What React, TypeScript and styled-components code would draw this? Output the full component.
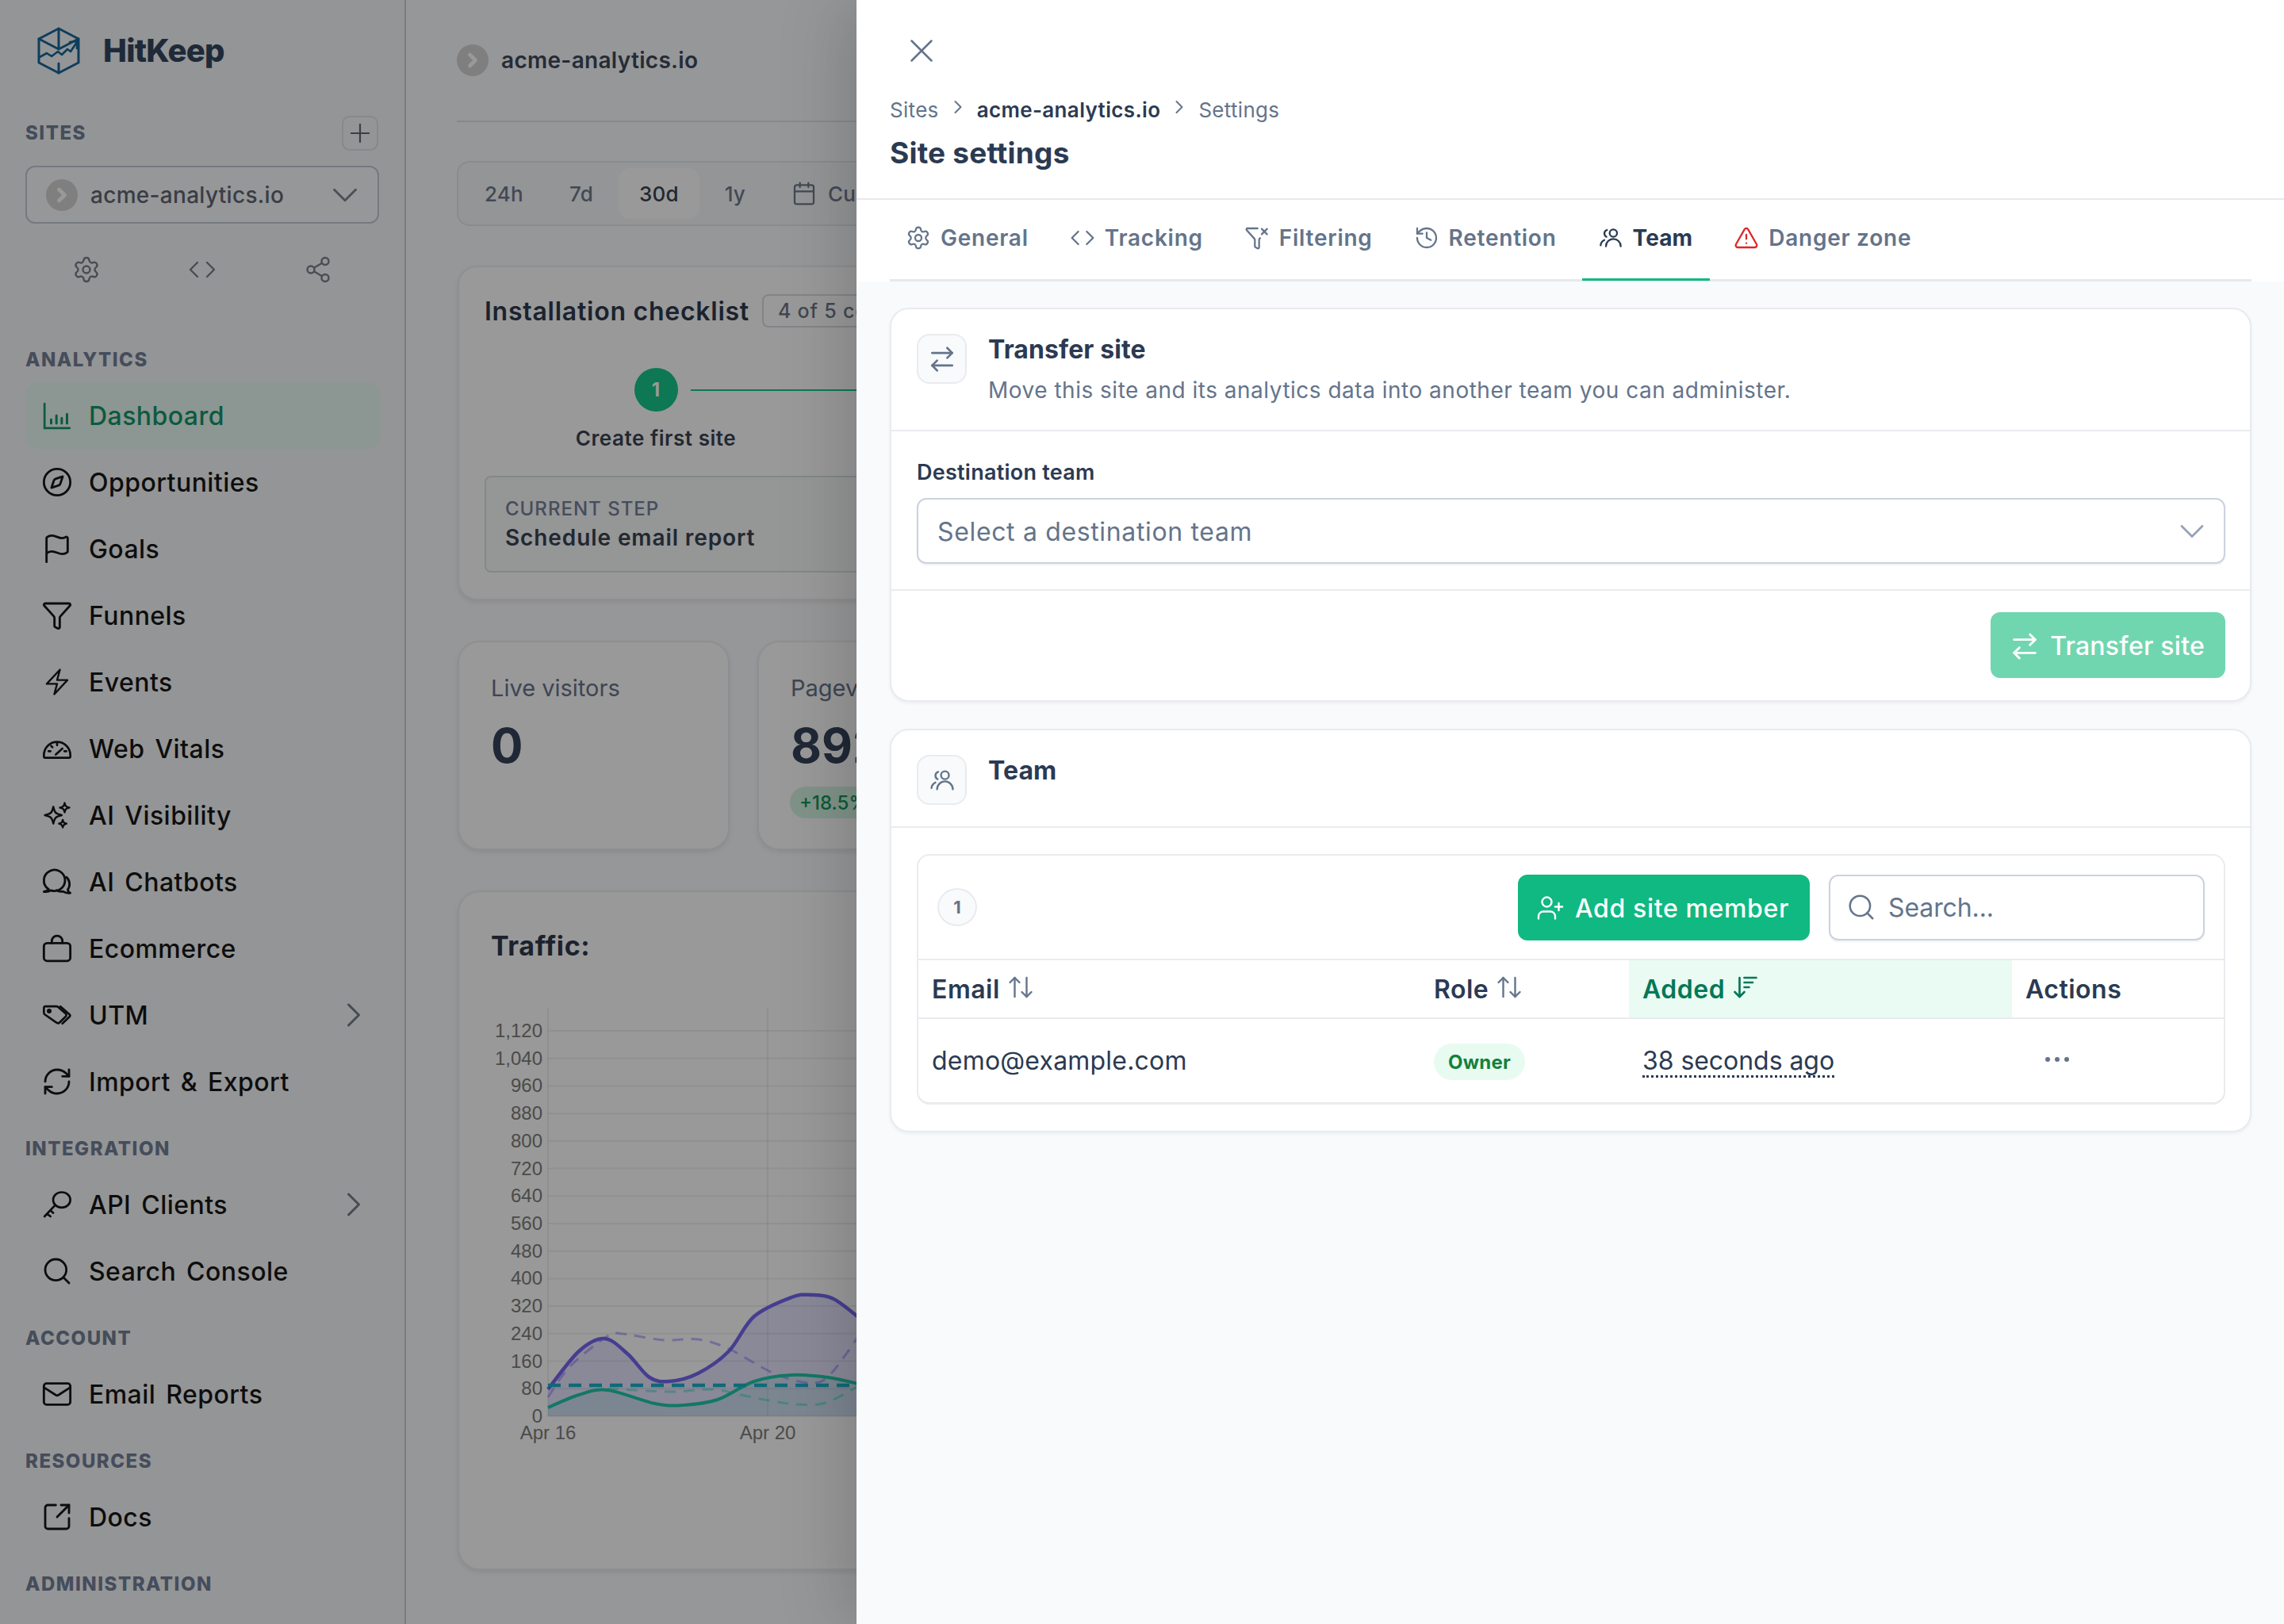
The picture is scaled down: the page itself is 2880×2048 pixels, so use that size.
import React from "react";
import styled, { createGlobalStyle } from "styled-components";
import {
  ArrowDownWideNarrow, ArrowRightLeft, ArrowUpDown, Calendar, ChevronDown, ChevronRight, Code, Compass, Flag, Funnel, FunnelX,
  History, Mail, Plus, RefreshCw, Search, Settings, Share2, SquareArrowOutUpRight, TriangleAlert, UserPlus, X,
} from "lucide-react";
import { HiOutlineBolt, HiOutlineSparkles } from "react-icons/hi2";

const Global = createGlobalStyle`
  html, body { margin: 0; padding: 0; background: #fff; }
  * { box-sizing: border-box; }
  body { font-family: Inter, "Liberation Sans", sans-serif; }
`;

const Shell = styled.div`
  position: relative; display: flex; width: 2880px; height: 2048px; overflow: hidden; background: #fbfcfe;
`;

/* ---------- sidebar ---------- */
const Sidebar = styled.aside`
  flex: 0 0 512px; height: 100%; background: #f7f9fb; border-right: 2px solid #ccd0d6; display: flex; flex-direction: column;
`;
const Brand = styled.div`
  display: flex; align-items: center; gap: 28px; padding: 34px 0 0 46px;
`;
const BrandName = styled.span`
  font-size: 40px; font-weight: 800; line-height: 60px; color: #34465f; letter-spacing: -0.8px;
`;
const SitesHead = styled.div`
  display: flex; align-items: center; justify-content: space-between; margin: 52px 33px 0 32px;
`;
const Label = styled.div`
  font-size: 24px; font-weight: 800; line-height: 40px; color: #74809a; letter-spacing: 1.5px; text-transform: uppercase;
`;
const AddSite = styled.span`
  display: flex; align-items: center; justify-content: center; width: 46px; height: 44px; border-radius: 10px;
  border: 2px solid #dfe4ea; color: #636a76;
`;
const SiteSelect = styled.div`
  display: flex; align-items: center; height: 73px; margin: 19px 32px 0 32px; padding: 0 14px 0 24px; border-radius: 12px;
  border: 2px solid #c3cad6; color: #5f6674; background: #fbfcfe;
`;
const SelectMark = styled.span`
  display: flex; color: #7e8694;
`;
const Avatar = styled.span`
  display: flex; align-items: center; justify-content: center; width: 40px; height: 40px; border-radius: 50%; background: #d4d4d4; color: #fff; flex: none;
`;
const SiteName = styled.span`
  font-size: 28px; font-weight: 500; margin-left: 16px; flex: 1; letter-spacing: 0.3px;
`;
const SiteTools = styled.div`
  display: grid; grid-template-columns: repeat(3, 1fr); margin: 26px 36px 0; height: 64px; color: #78808c;
  & > span { display: flex; align-items: center; justify-content: center; }
`;
const Section = styled.section<{ $top: number }>`
  margin-top: ${(p) => p.$top}px;
`;
const SectionLabel = styled(Label)`
  padding-left: 32px; margin-bottom: 8px;
`;
const NavRow = styled.div<{ $active?: boolean }>`
  display: flex; align-items: center; gap: 20px; height: 84px; margin: 0 30px 0 32px; padding: 0 8px 0 20px; border-radius: 16px;
  color: ${(p) => (p.$active ? "#139669" : "#161616")};
  background: ${(p) => (p.$active ? "#eafbf3" : "transparent")};
`;
const NavIcon = styled.span`
  display: flex; align-items: center; justify-content: center; width: 40px; height: 40px; flex: none;
`;
const NavText = styled.span`
  flex: 1; font-size: 32px; font-weight: 500; letter-spacing: 0.45px; word-spacing: 4px;
`;
const NavChevron = styled.span`
  display: flex; color: #767f8e;
`;

/* ---------- main content behind the drawer ---------- */
const Main = styled.main`
  flex: 1; min-width: 0; padding: 0 32px 0 64px;
`;
const TopBar = styled.div`
  display: flex; align-items: center; gap: 16px; height: 154px; border-bottom: 2px solid #e2e5e9;
`;
const TopSite = styled.span`
  font-size: 28px; font-weight: 600; color: #3f4a5c; letter-spacing: 0.3px;
`;
const RangeBar = styled.div`
  display: flex; align-items: center; gap: 6px; height: 82px; margin-top: 49px; padding: 0 7px; border-radius: 16px;
  border: 2px solid #e5e8ec; background: #f7f8fa;
`;
const RangeItem = styled.span<{ $active?: boolean }>`
  display: flex; align-items: center; gap: 14px; height: 64px; padding: 0 26px; border-radius: 14px; font-size: 26px; font-weight: 500; letter-spacing: 0.2px;
  color: ${(p) => (p.$active ? "#3a4353" : "#6f7b8e")};
  background: ${(p) => (p.$active ? "#fff" : "transparent")};
`;
const Card = styled.div`
  margin-left: 1px; background: #fff; border: 2px solid #eceef1; border-radius: 24px; box-shadow: 0 3px 6px rgba(0, 0, 0, 0.08);
`;
const Checklist = styled(Card)`
  margin-top: 50px; height: 422px; padding: 34px 32px;
`;
const CheckHead = styled.div`
  display: flex; align-items: center; gap: 16px; height: 42px;
`;
const CheckTitle = styled.span`
  font-size: 32px; font-weight: 600; color: #2f3a4d; letter-spacing: 0.75px; white-space: nowrap;
`;
const CheckBadge = styled.span`
  display: flex; align-items: center; height: 42px; padding: 0 18px; border: 2px solid #d9dde3; border-radius: 8px; color: #6e7788;
  font-size: 25px; font-weight: 500; letter-spacing: 0.8px; white-space: nowrap;
`;
const Steps = styled.div`
  display: flex; margin-top: 51px;
`;
const Step = styled.div`
  position: relative; flex: 0 0 432px; display: flex; flex-direction: column; align-items: center;
`;
const StepDot = styled.span`
  display: flex; align-items: center; justify-content: center; width: 55px; height: 55px; border-radius: 50%; background: #16c98a;
  color: #fff; font-size: 24px; font-weight: 700;
`;
const StepLine = styled.span`
  position: absolute; left: 260px; top: 27px; width: 400px; height: 2px; background: #16c98a;
`;
const StepName = styled.span`
  margin-top: 16px; font-size: 26px; line-height: 36px; font-weight: 600; color: #3a4353; letter-spacing: 0.55px;
`;
const CurrentStep = styled.div`
  margin-top: 29px; height: 122px; padding: 22px 24px; border: 2px solid #dde1e6; border-radius: 8px; background: #f9fafb;
`;
const CurrentLabel = styled.div`
  font-size: 24px; line-height: 36px; font-weight: 500; color: #74809a; letter-spacing: 1px; text-transform: uppercase;
`;
const CurrentName = styled.div`
  font-size: 28px; line-height: 37px; font-weight: 600; color: #3a4353; letter-spacing: 0.9px;
`;
const Stats = styled.div`
  display: grid; grid-template-columns: 344px 344px 344px; gap: 34px; margin-top: 51px;
`;
const Stat = styled(Card)`
  height: 264px; padding: 38px 40px; border-radius: 28px;
`;
const StatLabel = styled.div`
  font-size: 29px; line-height: 40px; color: #68748a;
`;
const StatValue = styled.div`
  margin-top: 16px; font-size: 60px; line-height: 72px; font-weight: 700; color: #36435a;
`;
const Trend = styled.span`
  display: inline-flex; align-items: center; height: 40px; margin-top: 16px; margin-left: -1px; padding: 0 12px; border-radius: 20px; background: #d5f5e5;
  color: #11985f; font-size: 24px; font-weight: 500;
`;
const Traffic = styled(Card)`
  margin-top: 51px; height: 857px; padding: 46px 40px; border-radius: 28px;
`;
const TrafficTitle = styled.div`
  font-size: 34px; line-height: 44px; font-weight: 700; color: #2f3a4d; letter-spacing: 0.6px;
`;
const ChartSvg = styled.svg`
  display: block; margin: 25px 0 0 -40px; overflow: visible;
  font-family: "Liberation Sans", Arial, sans-serif;
`;

/* ---------- overlay + drawer ---------- */
const Scrim = styled.div`
  position: absolute; inset: 0; background: rgba(0, 0, 0, 0.4);
`;
const Drawer = styled.div`
  position: absolute; top: 0; right: 0; bottom: 0; width: 1800px; background: #f9fafc; box-shadow: 0 0 90px rgba(0, 0, 0, 0.22);
  display: flex; flex-direction: column;
`;
const DrawerHead = styled.header`
  height: 252px; padding: 32px 42px 0; background: #fff; border-bottom: 2px solid #e6e8ec;
`;
const CloseButton = styled.span`
  display: flex; align-items: center; justify-content: center; width: 64px; height: 64px; margin-left: 8px; color: #64748b;
`;
const Crumbs = styled.nav`
  display: flex; align-items: center; height: 40px; margin-top: 22px; gap: 10px; font-size: 26px; color: #64748b; letter-spacing: 0.3px;
`;
const CrumbStrong = styled.span`
  font-weight: 600; color: #2b3a52; letter-spacing: 0.35px;
`;
const CrumbSep = styled.span`
  display: flex; margin-top: -6px; color: #64748b;
`;
const DrawerTitle = styled.h1`
  margin: 11px 0 0; font-size: 37px; line-height: 48px; font-weight: 700; color: #2b3a52; letter-spacing: 0.2px;
`;
const TabsRow = styled.div`
  display: flex; background: #fff;
`;
const Tabs = styled.div`
  display: flex; flex: 1; gap: 10px; height: 103px; margin: 0 41px 0 42px; border-bottom: 3px solid #e6e8ec;
`;
const Tab = styled.div<{ $active?: boolean }>`
  display: flex; align-items: center; gap: 12px; height: 102px; padding: 0 22px 4px 20px; font-size: 28px; margin-bottom: -2px;
  font-weight: ${(p) => (p.$active ? 700 : 600)};
  letter-spacing: ${(p) => (p.$active ? 0.1 : 0.75)}px;
  color: ${(p) => (p.$active ? "#2b3a52" : "#64748b")};
  border-bottom: 3px solid ${(p) => (p.$active ? "#10b981" : "transparent")};
`;
const Body = styled.div`
  padding: 33px 41px 0 42px; display: flex; flex-direction: column; gap: 34px;
`;
const Panel = styled.section`
  background: #fff; border: 2px solid #e9ebef; border-radius: 24px; box-shadow: 0 2px 4px rgba(15, 23, 42, 0.05);
`;
const PanelHead = styled.div<{ $pad: number }>`
  display: flex; gap: 27px; padding: 31px 31px ${(p) => p.$pad}px 32px; border-bottom: 2px solid #e9ebef;
`;
const IconTile = styled.span`
  display: flex; align-items: center; justify-content: center; width: 63px; height: 63px; flex: none; border-radius: 16px;
  background: #f8fafc; border: 2px solid #e9ebef; color: #64748b;
`;
const PanelTitle = styled.div`
  font-size: 32px; line-height: 40px; font-weight: 700; color: #2b3a52; letter-spacing: 0.1px;
`;
const PanelDesc = styled.div`
  margin-top: 11px; font-size: 28px; line-height: 40px; color: #64748b; letter-spacing: 0.5px;
`;
const FormBlock = styled.div`
  padding: 34px 31px 32px 32px; border-bottom: 2px solid #e9ebef;
`;
const FieldLabel = styled.div`
  font-size: 27px; line-height: 36px; font-weight: 600; color: #2b3a52; letter-spacing: 0.25px;
`;
const Select = styled.div`
  display: flex; align-items: center; justify-content: space-between; height: 83px; margin-top: 14px; padding: 1px 14px 0 24px;
  border: 2px solid #cbd2de; border-radius: 12px; box-shadow: 0 2px 2px rgba(15, 23, 42, 0.05);
  font-size: 32px; color: #64748b; letter-spacing: 0.65px;
`;
const SelectChevron = styled.span`
  display: flex; color: #94a3b8;
`;
const PanelFoot = styled.div`
  display: flex; justify-content: flex-end; padding: 27px 31px 28px;
`;
const PrimaryButton = styled.span<{ $muted?: boolean }>`
  display: inline-flex; align-items: center; gap: ${(p) => (p.$muted ? 12 : 13)}px; height: 83px; padding: 2px 26px 0 ${(p) => (p.$muted ? 23 : 23)}px; border-radius: 12px; font-size: 32px; font-weight: 500; color: #fff; white-space: nowrap;
  letter-spacing: ${(p) => (p.$muted ? 0.25 : 0.65)}px;
  background: ${(p) => (p.$muted ? "#70d6b0" : "#10b981")};
`;
const PanelContent = styled.div`
  padding: 33px 31px 33px 32px;
`;
const TableBox = styled.div`
  border: 2px solid #e9ebef; border-bottom-width: 3px; border-radius: 16px;
`;
const Toolbar = styled.div`
  display: flex; align-items: center; gap: 24px; height: 132px; padding: 0 24px; border-bottom: 2px solid #e9ebef;
`;
const Count = styled.span`
  display: flex; align-items: center; justify-content: center; width: 50px; height: 48px; margin-right: auto; border-radius: 50%;
  background: #f8fafc; border: 2px solid #e9ebef; color: #64748b; font-size: 22px; font-weight: 700;
`;
const SearchBox = styled.div`
  display: flex; align-items: center; gap: 15px; width: 474px; height: 83px; padding: 0 20px; border: 2px solid #cbd2de; border-radius: 12px;
  box-shadow: 0 2px 2px rgba(15, 23, 42, 0.05); font-size: 32px; color: #64748b; letter-spacing: -0.1px;
`;
const Grid = styled.div`
  display: grid; grid-template-columns: 633px 263px 483px 1fr; align-items: stretch;
`;
const HeadRow = styled(Grid)`
  height: 74px; border-bottom: 2px solid #e9ebef;
`;
const HeadCell = styled.div<{ $sorted?: boolean }>`
  display: flex; align-items: center; gap: 8px; padding-left: 17px; font-size: 32px; font-weight: 600; letter-spacing: 0.5px;
  color: ${(p) => (p.$sorted ? "#047857" : "#2b3a52")};
  background: ${(p) => (p.$sorted ? "#e9fbf3" : "transparent")};
`;
const SortIcon = styled.span<{ $sorted?: boolean }>`
  display: flex; margin-top: -4px; color: ${(p) => (p.$sorted ? "#047857" : "#64748b")};
`;
const BodyRow = styled(Grid)`
  height: 105px;
`;
const Cell = styled.div`
  display: flex; align-items: center; padding-left: 17px; font-size: 32px; color: #2b3a52; letter-spacing: 0.2px;
`;
const OwnerPill = styled.span`
  display: inline-flex; align-items: center; height: 46px; margin-top: 3px; padding: 0 18px; border-radius: 23px; background: #e8fbf0; color: #15803d;
  font-size: 24px; font-weight: 700;
`;
const TimeAgo = styled.span`
  margin-top: 3px; border-bottom: 3px dotted #2b3a52; line-height: 36px; letter-spacing: -0.05px;
`;
const Dots = styled.svg`
  display: block; margin: -4px 0 0 24px; color: #64748b;
`;

/* ---------- drawings ---------- */
const Logo = () => (
  <svg width="56" height="60" viewBox="0 0 56 60" fill="none" stroke="#196799" strokeWidth="3" strokeLinejoin="round" strokeLinecap="round">
    <path d="M28 2 53 15v30L28 58 3 45V15z" />
    <path d="M3 15l25 13 25-13M28 2v26M28 46v12" />
    <path d="M4 38l9-5 6 4 8-6 5 4 7-7 4 3 8-12" strokeWidth="2.6" />
    <path d="M42 19l9-1 0 9" strokeWidth="2.6" />
  </svg>
);
const ChartIcon = () => (
  <svg width="40" height="40" viewBox="0 0 24 24" fill="none" stroke="currentColor" strokeWidth="1.6" strokeLinecap="round">
    <path d="M2.500 3v18.500h19" />
    <path d="M7.500 15v3M11.500 12v6M15.500 14v4M19.500 11v7" strokeWidth="1.8" />
  </svg>
);
const GaugeIcon = () => (
  <svg width="40" height="40" viewBox="0 0 24 24" fill="none" stroke="currentColor" strokeWidth="1.6" strokeLinecap="round" strokeLinejoin="round">
    <path d="M2 17a10 10 0 0 1 20 0v1a1 1 0 0 1-1 1H3a1 1 0 0 1-1-1z" />
    <path d="M11 16.500l5-4.500M12 7.500v2M5.500 14h1.500M17.500 14H19M7.500 10l1 1" />
  </svg>
);
const ChatsIcon = () => (
  <svg width="40" height="40" viewBox="0 0 24 24" fill="none" stroke="currentColor" strokeWidth="1.7" strokeLinecap="round" strokeLinejoin="round">
    <path d="M2 19.500c2-.4 3-1 3.600-1.800A8 8 0 1 1 18 11a8 8 0 0 1-10.600 7.500 8 8 0 0 1-5.400 1z" />
    <path d="M19 8.500a7 7 0 0 1 1 9.500c.3 1 1 2 2 2.500-2 .2-4-.2-5.500-1.200a7 7 0 0 1-5-.8" />
  </svg>
);
const BagIcon = () => (
  <svg width="40" height="40" viewBox="0 0 24 24" fill="none" stroke="currentColor" strokeWidth="1.7" strokeLinecap="round" strokeLinejoin="round">
    <rect x="2" y="8" width="20" height="13.500" rx="2.500" />
    <path d="M8 8V6.500a4 4 0 0 1 8 0V8" />
  </svg>
);
const TagsIcon = () => (
  <svg width="40" height="40" viewBox="0 0 24 24" fill="none" stroke="currentColor" strokeWidth="1.6" strokeLinecap="round" strokeLinejoin="round">
    <path d="M2 6.500a1 1 0 0 1 1-1h8.500a2 2 0 0 1 1.300.5L18.500 11a1.500 1.500 0 0 1 0 2.200L14 17.500a2 2 0 0 1-2.700.1L2.800 11.700A2 2 0 0 1 2 10z" />
    <path d="M14.500 5.500l7 6.200a1 1 0 0 1 0 1.500l-5.500 5.300" />
    <circle cx="6" cy="9" r="1" />
  </svg>
);
const KeyIcon = () => (
  <svg width="40" height="40" viewBox="0 0 24 24" fill="none" stroke="currentColor" strokeWidth="1.6" strokeLinecap="round" strokeLinejoin="round">
    <ellipse cx="15.500" cy="8.500" rx="6.500" ry="5.800" />
    <path d="M10.500 12.500 2.500 21M4.500 19l2.500 2M7 16.500l2 1.800" />
  </svg>
);
const TeamIcon = ({ size = 34 }: { size?: number }) => (
  <svg width={size} height={size} viewBox="0 0 24 24" fill="none" stroke="currentColor" strokeWidth="1.7" strokeLinecap="round" strokeLinejoin="round">
    <circle cx="14.500" cy="7.500" r="3.500" />
    <path d="M7.500 20a7 7 0 0 1 14 0M8.500 4.500a3.500 3.500 0 0 0-.5 6.500M2.500 19a6 6 0 0 1 3.500-5" />
  </svg>
);
const SiteChevron = () => <ChevronRight size={28} strokeWidth={4} />;

/* ---------- chart ---------- */
type Pt = [number, number];
const smooth = (pts: Pt[]) => {
  let d = `M${pts[0][0]} ${pts[0][1]}`;
  for (let i = 0; i < pts.length - 1; i++) {
    const p0 = pts[i - 1] || pts[i];
    const p1 = pts[i];
    const p2 = pts[i + 1];
    const p3 = pts[i + 2] || p2;
    const c1x = p1[0] + (p2[0] - p0[0]) / 6;
    const c1y = p1[1] + (p2[1] - p0[1]) / 6;
    const c2x = p2[0] - (p3[0] - p1[0]) / 6;
    const c2y = p2[1] - (p3[1] - p1[1]) / 6;
    d += ` C${c1x} ${c1y} ${c2x} ${c2y} ${p2[0]} ${p2[1]}`;
  }
  return d;
};
const purple: Pt[] = [[690, 1752], [729, 1704], [761, 1688], [790, 1707], [818, 1737], [843, 1742], [879, 1732], [918, 1704], [950, 1660], [997, 1636], [1022, 1633], [1050, 1638], [1085, 1664]];
const purpleDash: Pt[] = [[690, 1762], [718, 1723], [765, 1685], [783, 1682], [836, 1690], [879, 1689], [918, 1701], [975, 1732], [1022, 1744], [1047, 1732], [1085, 1680]];
const green: Pt[] = [[690, 1775], [729, 1759], [765, 1753], [825, 1770], [861, 1772], [904, 1765], [950, 1742], [997, 1734], [1043, 1737], [1085, 1746]];
const greenDash: Pt[] = [[765, 1751], [843, 1755], [897, 1752], [933, 1759], [968, 1766], [1004, 1771], [1040, 1769], [1085, 1746]];
const yLabels = ["1,120", "1,040", "960", "880", "800", "720", "640", "560", "480", "400", "320", "240", "160", "80", "0"];
const area = (pts: Pt[]) => `${smooth(pts)} L1085 1786 L690 1786 Z`;

const Chart = () => (
  <ChartSvg width="520" height="600" viewBox="578 1240 520 600">
    {yLabels.map((l, i) => {
      const y = 1300 + i * 34.71;
      return (
        <g key={l}>
          <line x1="690" x2="1090" y1={y} y2={y} stroke="#000" strokeOpacity="0.06" strokeWidth="2" />
          <text x="683" y={y + 8} textAnchor="end" fontSize="24" fill="#7d7d7d">{l}</text>
        </g>
      );
    })}
    <line x1="690" x2="690" y1="1271" y2="1786" stroke="#000" strokeOpacity="0.06" strokeWidth="2" />
    <line x1="967" x2="967" y1="1271" y2="1786" stroke="#000" strokeOpacity="0.06" strokeWidth="2" />
    <text x="690" y="1815" textAnchor="middle" fontSize="24" fill="#7d7d7d">Apr 16</text>
    <text x="967" y="1815" textAnchor="middle" fontSize="24" fill="#7d7d7d">Apr 20</text>
    <path d={area(purple)} fill="#6a55f5" fillOpacity="0.16" />
    <path d={area(green)} fill="#21c9a7" fillOpacity="0.12" />
    <path d={smooth(purpleDash)} fill="none" stroke="#7d67ff" strokeOpacity="0.45" strokeWidth="3" strokeDasharray="14 10" />
    <path d={smooth(greenDash)} fill="none" stroke="#21d9b7" strokeOpacity="0.45" strokeWidth="3" strokeDasharray="14 10" />
    <path d={smooth(purple)} fill="none" stroke="#7468f0" strokeWidth="4.500" />
    <path d={smooth(green)} fill="none" stroke="#1fc9a8" strokeWidth="4" />
    <line x1="690" x2="1085" y1="1747" y2="1747" stroke="#19afc8" strokeWidth="4.500" strokeDasharray="16 10" />
  </ChartSvg>
);

/* ---------- data ---------- */
type Nav = { name: string; icon: React.ReactNode; more?: boolean; active?: boolean };
const I = { size: 40, strokeWidth: 1.7 };
const analytics: Nav[] = [
  { name: "Dashboard", icon: <ChartIcon />, active: true },
  { name: "Opportunities", icon: <Compass {...I} /> },
  { name: "Goals", icon: <Flag {...I} /> },
  { name: "Funnels", icon: <Funnel {...I} /> },
  { name: "Events", icon: <HiOutlineBolt size={38} /> },
  { name: "Web Vitals", icon: <GaugeIcon /> },
  { name: "AI Visibility", icon: <HiOutlineSparkles size={38} /> },
  { name: "AI Chatbots", icon: <ChatsIcon /> },
  { name: "Ecommerce", icon: <BagIcon /> },
  { name: "UTM", icon: <TagsIcon />, more: true },
  { name: "Import & Export", icon: <RefreshCw {...I} /> },
];
const integration: Nav[] = [
  { name: "API Clients", icon: <KeyIcon />, more: true },
  { name: "Search Console", icon: <Search {...I} /> },
];
const account: Nav[] = [{ name: "Email Reports", icon: <Mail {...I} /> }];
const resources: Nav[] = [{ name: "Docs", icon: <SquareArrowOutUpRight {...I} /> }];

const NavList = ({ items }: { items: Nav[] }) => (
  <>
    {items.map((n) => (
      <NavRow key={n.name} $active={n.active}>
        <NavIcon>{n.icon}</NavIcon>
        <NavText>{n.name}</NavText>
        {n.more && (
          <NavChevron>
            <ChevronRight size={52} strokeWidth={1.4} />
          </NavChevron>
        )}
      </NavRow>
    ))}
  </>
);

const tabs = [
  { name: "General", icon: <Settings size={32} strokeWidth={1.7} /> },
  { name: "Tracking", icon: <Code size={32} strokeWidth={1.7} /> },
  { name: "Filtering", icon: <FunnelX size={32} strokeWidth={1.7} /> },
  { name: "Retention", icon: <History size={32} strokeWidth={1.7} /> },
  { name: "Team", icon: <TeamIcon size={32} />, active: true },
  { name: "Danger zone", icon: <TriangleAlert size={32} strokeWidth={1.7} color="#dc2626" /> },
];

export default function App() {
  return (
    <Shell>
      <Global />
      <Sidebar>
        <Brand>
          <Logo />
          <BrandName>HitKeep</BrandName>
        </Brand>
        <SitesHead>
          <Label>Sites</Label>
          <AddSite><Plus size={38} strokeWidth={1.4} /></AddSite>
        </SitesHead>
        <SiteSelect>
          <Avatar><SiteChevron /></Avatar>
          <SiteName>acme-analytics.io</SiteName>
          <SelectMark><ChevronDown size={54} strokeWidth={1.3} /></SelectMark>
        </SiteSelect>
        <SiteTools>
          <span><Settings size={36} strokeWidth={1.6} /></span>
          <span><Code size={36} strokeWidth={1.6} /></span>
          <span><Share2 size={36} strokeWidth={1.6} /></span>
        </SiteTools>
        <Section $top={62}>
          <SectionLabel>Analytics</SectionLabel>
          <NavList items={analytics} />
        </Section>
        <Section $top={23}>
          <SectionLabel>Integration</SectionLabel>
          <NavList items={integration} />
        </Section>
        <Section $top={23}>
          <SectionLabel>Account</SectionLabel>
          <NavList items={account} />
        </Section>
        <Section $top={23}>
          <SectionLabel>Resources</SectionLabel>
          <NavList items={resources} />
        </Section>
        <Section $top={23}>
          <SectionLabel>Administration</SectionLabel>
        </Section>
      </Sidebar>

      <Main>
        <TopBar>
          <Avatar><SiteChevron /></Avatar>
          <TopSite>acme-analytics.io</TopSite>
        </TopBar>
        <RangeBar>
          <RangeItem>24h</RangeItem>
          <RangeItem>7d</RangeItem>
          <RangeItem $active>30d</RangeItem>
          <RangeItem>1y</RangeItem>
          <RangeItem><Calendar size={32} strokeWidth={1.7} />Custom</RangeItem>
        </RangeBar>
        <Checklist>
          <CheckHead>
            <CheckTitle>Installation checklist</CheckTitle>
            <CheckBadge>4 of 5 completed</CheckBadge>
          </CheckHead>
          <Steps>
            <Step>
              <StepDot>1</StepDot>
              <StepLine />
              <StepName>Create first site</StepName>
            </Step>
          </Steps>
          <CurrentStep>
            <CurrentLabel>Current step</CurrentLabel>
            <CurrentName>Schedule email report</CurrentName>
          </CurrentStep>
        </Checklist>
        <Stats>
          <Stat>
            <StatLabel>Live visitors</StatLabel>
            <StatValue>0</StatValue>
          </Stat>
          <Stat>
            <StatLabel>Pageviews</StatLabel>
            <StatValue>892</StatValue>
            <Trend>+18.5%</Trend>
          </Stat>
        </Stats>
        <Traffic>
          <TrafficTitle>Traffic:</TrafficTitle>
          <Chart />
        </Traffic>
      </Main>

      <Scrim />

      <Drawer>
        <DrawerHead>
          <CloseButton><X size={50} strokeWidth={1.2} /></CloseButton>
          <Crumbs>
            <span>Sites</span>
            <CrumbSep><ChevronRight size={28} strokeWidth={1.7} /></CrumbSep>
            <CrumbStrong>acme-analytics.io</CrumbStrong>
            <CrumbSep><ChevronRight size={28} strokeWidth={1.7} /></CrumbSep>
            <span>Settings</span>
          </Crumbs>
          <DrawerTitle>Site settings</DrawerTitle>
        </DrawerHead>
        <TabsRow>
          <Tabs>
            {tabs.map((t) => (
              <Tab key={t.name} $active={t.active}>
                {t.icon}
                {t.name}
              </Tab>
            ))}
          </Tabs>
        </TabsRow>
        <Body>
          <Panel>
            <PanelHead $pad={30}>
              <IconTile><ArrowRightLeft size={38} strokeWidth={1.7} /></IconTile>
              <div>
                <PanelTitle>Transfer site</PanelTitle>
                <PanelDesc>Move this site and its analytics data into another team you can administer.</PanelDesc>
              </div>
            </PanelHead>
            <FormBlock>
              <FieldLabel>Destination team</FieldLabel>
              <Select>
                Select a destination team
                <SelectChevron><ChevronDown size={52} strokeWidth={1.3} /></SelectChevron>
              </Select>
            </FormBlock>
            <PanelFoot>
              <PrimaryButton $muted><ArrowRightLeft size={40} strokeWidth={1.7} />Transfer site</PrimaryButton>
            </PanelFoot>
          </Panel>
          <Panel>
            <PanelHead $pad={27}>
              <IconTile><TeamIcon size={34} /></IconTile>
              <PanelTitle>Team</PanelTitle>
            </PanelHead>
            <PanelContent>
              <TableBox>
                <Toolbar>
                  <Count>1</Count>
                  <PrimaryButton><UserPlus size={36} strokeWidth={1.6} />Add site member</PrimaryButton>
                  <SearchBox><Search size={38} strokeWidth={1.6} />Search...</SearchBox>
                </Toolbar>
                <HeadRow>
                  <HeadCell>Email<SortIcon><ArrowUpDown size={36} strokeWidth={1.6} /></SortIcon></HeadCell>
                  <HeadCell>Role<SortIcon><ArrowUpDown size={36} strokeWidth={1.6} /></SortIcon></HeadCell>
                  <HeadCell $sorted>Added<SortIcon $sorted><ArrowDownWideNarrow size={36} strokeWidth={1.8} /></SortIcon></HeadCell>
                  <HeadCell>Actions</HeadCell>
                </HeadRow>
                <BodyRow>
                  <Cell>demo@example.com</Cell>
                  <Cell><OwnerPill>Owner</OwnerPill></Cell>
                  <Cell><TimeAgo>38 seconds ago</TimeAgo></Cell>
                  <Cell>
                    <Dots width="32" height="8" viewBox="0 0 32 8" fill="currentColor">
                      <circle cx="4" cy="4" r="3" /><circle cx="16" cy="4" r="3" /><circle cx="28" cy="4" r="3" />
                    </Dots>
                  </Cell>
                </BodyRow>
              </TableBox>
            </PanelContent>
          </Panel>
        </Body>
      </Drawer>
    </Shell>
  );
}
